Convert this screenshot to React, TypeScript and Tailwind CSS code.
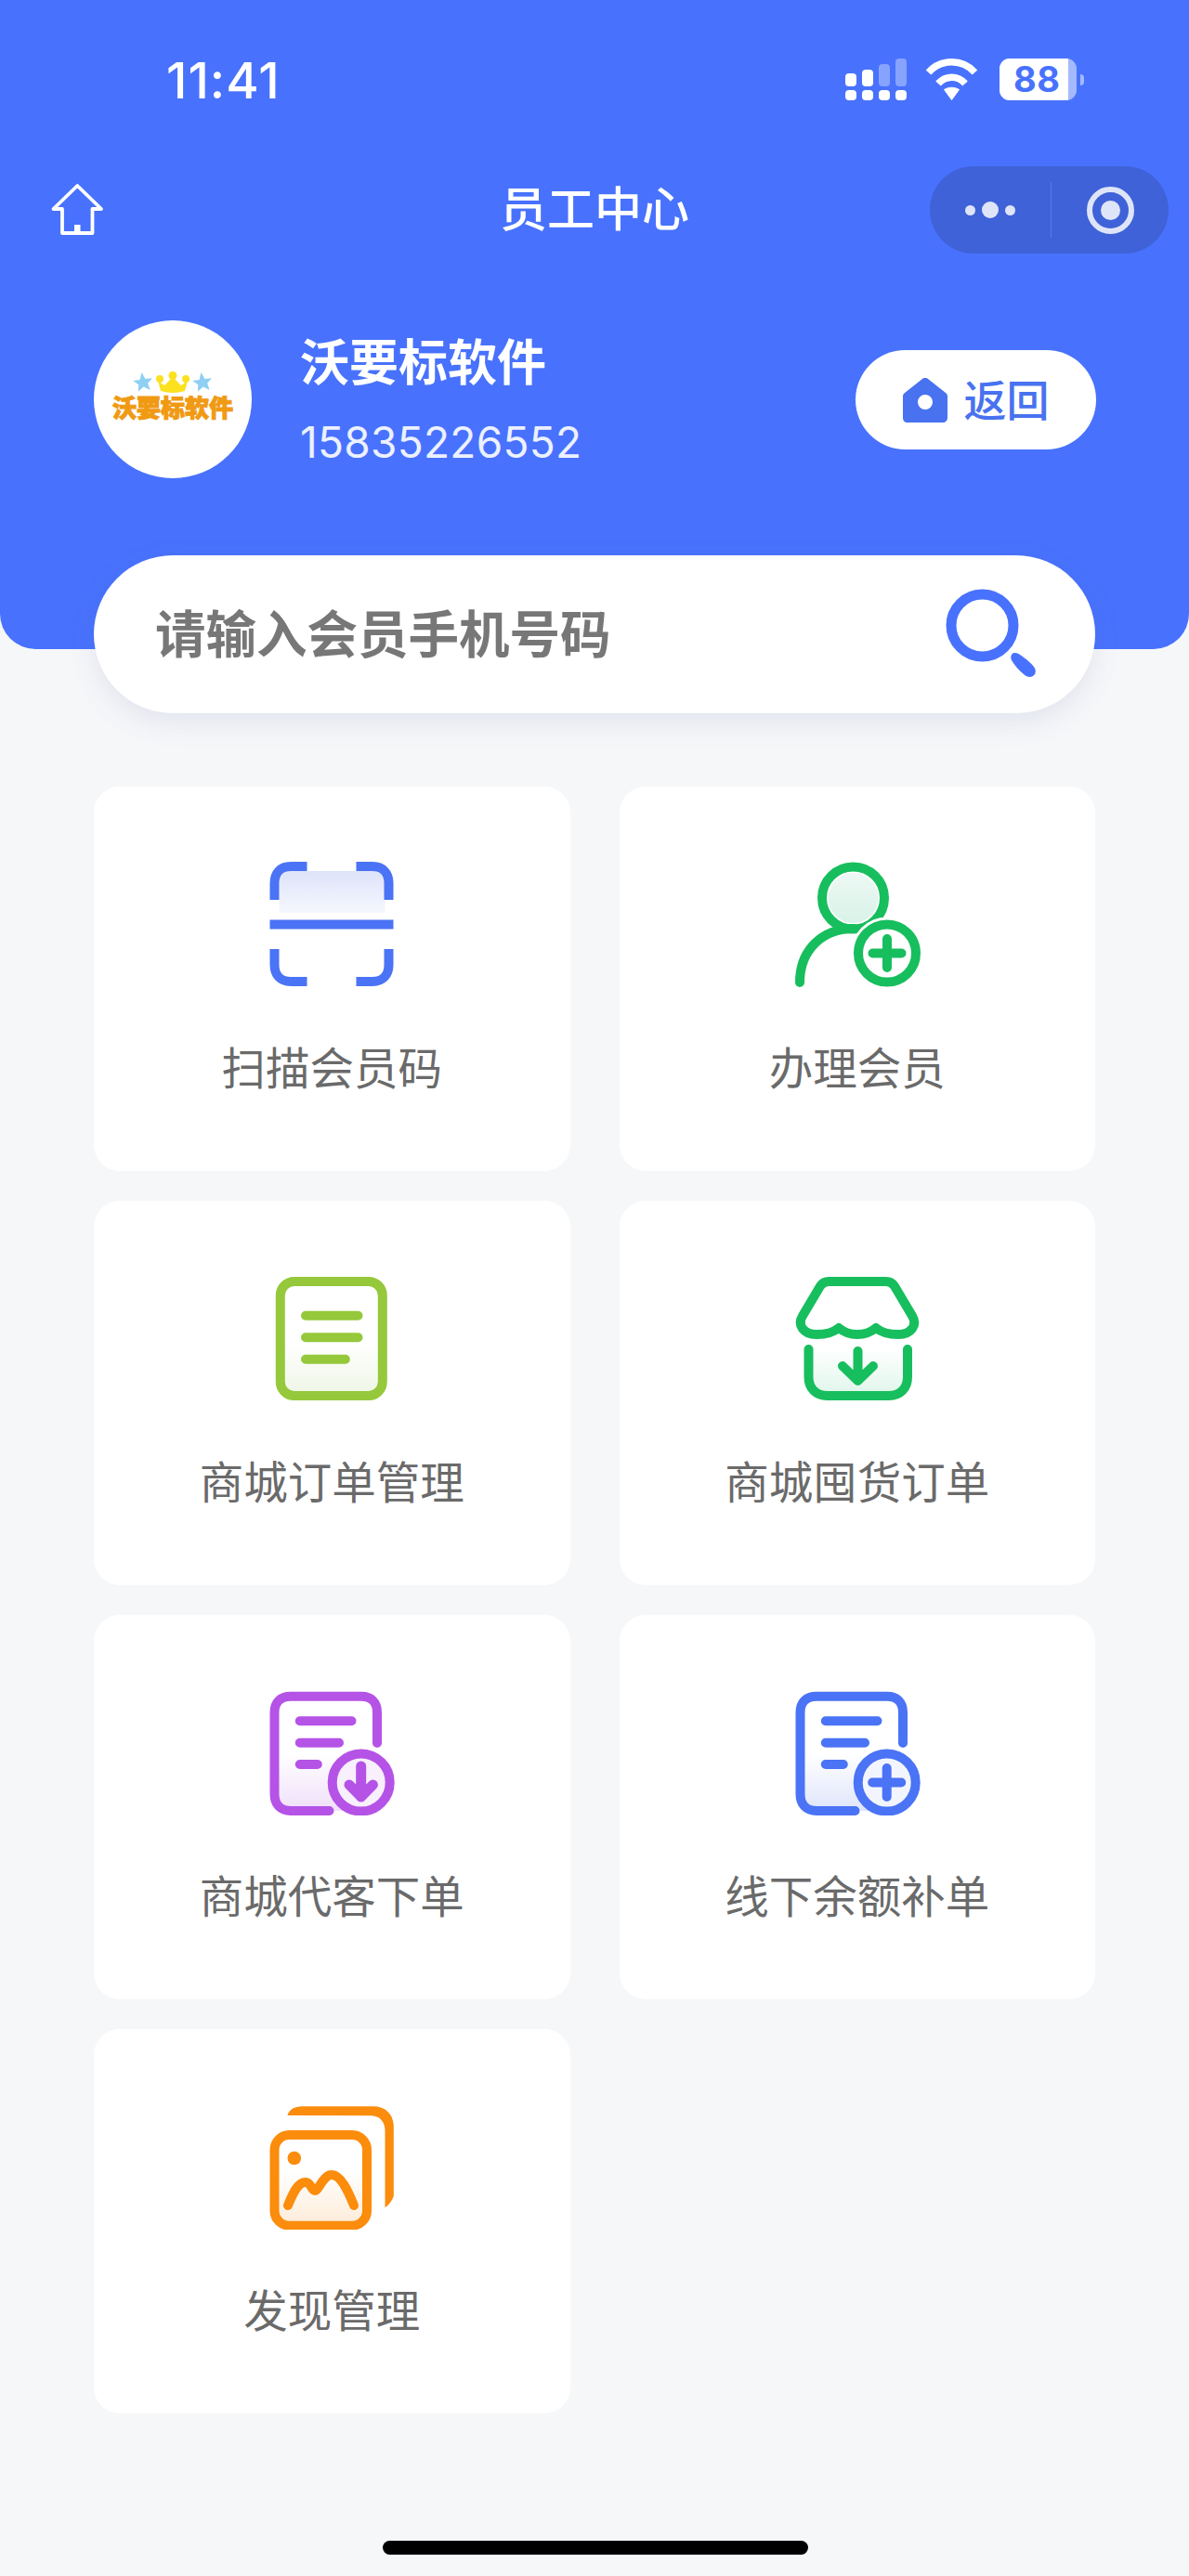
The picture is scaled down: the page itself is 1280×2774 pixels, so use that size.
import React from 'react';

const FONT = "font-['Inter','Noto_Sans_CJK_SC',sans-serif]";

function ScanIcon() {
  return (
    <svg width="136" height="136" viewBox="0 0 136 136" fill="none">
      <defs>
        <linearGradient id="scanFill" x1="0" y1="0" x2="0" y2="1">
          <stop offset="0" stopColor="#dde3fa" />
          <stop offset="1" stopColor="#f6f8fe" />
        </linearGradient>
      </defs>
      <rect x="11.500" y="11" width="114" height="45" fill="url(#scanFill)" />
      <path
        d="M41.500 6H24C13 6 6.500 13 6.500 24v18M94.500 6H112c11 0 17.500 7 17.500 18v18M6.500 95v17c0 11 6.500 18 17.500 18h17.500M129.500 95v17c0 11-6.500 18-17.500 18H94.500"
        stroke="#4a73f5"
        strokeWidth="10"
      />
      <path d="M1.500 68.500h133" stroke="#4a73f5" strokeWidth="10" />
    </svg>
  );
}

function MemberIcon() {
  return (
    <svg width="136" height="136" viewBox="0 0 136 136" fill="none">
      <defs>
        <linearGradient id="memberFill" x1="0" y1="0" x2="0" y2="1">
          <stop offset="0" stopColor="#eef8f4" />
          <stop offset="1" stopColor="#d8f3e8" />
        </linearGradient>
      </defs>
      <circle cx="63.500" cy="40" r="27" fill="url(#memberFill)" />
      <circle cx="63.500" cy="40" r="33.500" stroke="#17be5d" strokeWidth="10" />
      <path d="M6 131C6 96 30 73 64 73" stroke="#17be5d" strokeWidth="10" strokeLinecap="round" />
      <circle cx="100" cy="99.500" r="39" fill="white" />
      <circle cx="100" cy="99.500" r="31" stroke="#17be5d" strokeWidth="10" fill="white" />
      <path d="M100 84v31M84.500 99.500h31" stroke="#17be5d" strokeWidth="10" strokeLinecap="round" />
    </svg>
  );
}

function OrderIcon() {
  return (
    <svg width="136" height="136" viewBox="0 0 136 136" fill="none">
      <defs>
        <linearGradient id="orderFill" x1="0" y1="0" x2="0" y2="1">
          <stop offset="0.55" stopColor="#ffffff" />
          <stop offset="1" stopColor="#eef5e4" />
        </linearGradient>
      </defs>
      <rect x="12.800" y="7" width="110" height="123" rx="15" fill="url(#orderFill)" stroke="#95c83b" strokeWidth="10" />
      <path d="M40 43.700h56.500M40 67.300h56.500M40 90.700h42.800" stroke="#95c83b" strokeWidth="10" strokeLinecap="round" />
    </svg>
  );
}

function StoreIcon() {
  return (
    <svg width="136" height="136" viewBox="0 0 136 136" fill="none">
      <defs>
        <linearGradient id="storeFill" x1="0" y1="0" x2="0" y2="1">
          <stop offset="0" stopColor="#ffffff" />
          <stop offset="1" stopColor="#dff5ea" />
        </linearGradient>
      </defs>
      <path d="M15.500 80v30c0 12 8 20 20 20h66.500c12 0 20-8 20-20V80z" fill="url(#storeFill)" />
      <path d="M15.500 80v30c0 12 8 20 20 20h66.500c12 0 20-8 20-20V80" stroke="#17be5d" strokeWidth="10" strokeLinecap="round" />
      <path
        d="M37 7H99C103 7 106 9 108 12L127 44C133 54 126 64 112 64C102 64 94 62 88 57C82 62 76 64 68 64C60 64 54 62 48 57C42 62 34 64 24 64C10 64 3 54 9 44L28 12C30 9 33 7 37 7Z"
        stroke="#17be5d"
        strokeWidth="10"
        strokeLinejoin="round"
      />
      <path d="M68.500 82v32M52 98l16.500 16L85 98" stroke="#17be5d" strokeWidth="10" strokeLinecap="round" strokeLinejoin="round" />
    </svg>
  );
}

function DocIcon({ color, tint, id, plus }: { color: string; tint: string; id: string; plus?: boolean }) {
  return (
    <svg width="136" height="136" viewBox="0 0 136 136" fill="none">
      <defs>
        <linearGradient id={id} x1="0" y1="0" x2="0" y2="1">
          <stop offset="0.5" stopColor="#ffffff" />
          <stop offset="1" stopColor={tint} />
        </linearGradient>
      </defs>
      <path d="M6.500 25c0-11 7-17.300 17-17.300h76c10 0 17.500 6.300 17.500 17.300v88c0 11-7 18-17 18H23.500c-10 0-17-7-17-18z" fill={`url(#${id})`} />
      <path d="M65.500 131H24C13 131 6.500 124 6.500 113V25C6.500 14 13 7.700 24 7.700h76C110.500 7.700 117 14 117 25v33" stroke={color} strokeWidth="10" strokeLinecap="round" />
      <path d="M33.800 34.300h55.700M33.800 57.700H76M33.800 81h19" stroke={color} strokeWidth="10" strokeLinecap="round" />
      <circle cx="99.700" cy="100.500" r="31" fill={plus ? '#f3f5fe' : '#f8f0fd'} stroke={color} strokeWidth="10" />
      {plus ? (
        <path d="M99.700 85v31M84.200 100.500h31" stroke={color} strokeWidth="10" strokeLinecap="round" />
      ) : (
        <path d="M99.700 83v33M87 103l12.700 13 12.700-13" stroke={color} strokeWidth="11" strokeLinecap="round" strokeLinejoin="round" />
      )}
    </svg>
  );
}

function GalleryIcon() {
  return (
    <svg width="136" height="136" viewBox="0 0 136 136" fill="none">
      <defs>
        <linearGradient id="galleryFill" x1="0" y1="0" x2="0" y2="1">
          <stop offset="0.4" stopColor="#ffffff" />
          <stop offset="1" stopColor="#fdebd8" />
        </linearGradient>
      </defs>
      <path d="M20.500 13C22 7 28 3.300 36 3.300H113C126 3.300 134.800 12 134.800 25V100C133 105 130 109 125.500 112.300V30C125.500 20 120 13.300 110 13.300Z" fill="#fb8c0c" />
      <rect x="6.500" y="34" width="99.500" height="97.700" rx="16" fill="url(#galleryFill)" stroke="#fb8c0c" strokeWidth="10" />
      <circle cx="27.800" cy="59" r="7.300" fill="#fb8c0c" />
      <path d="M21 110C27 95 32 85 40 85C46 85 46 94 50 94C54 94 59 77 68 77C78 77 86 95 92 110" stroke="#fb8c0c" strokeWidth="10" strokeLinecap="round" strokeLinejoin="round" />
    </svg>
  );
}

const items = [
  { label: '扫描会员码', icon: <ScanIcon /> },
  { label: '办理会员', icon: <MemberIcon /> },
  { label: '商城订单管理', icon: <OrderIcon /> },
  { label: '商城囤货订单', icon: <StoreIcon /> },
  { label: '商城代客下单', icon: <DocIcon id="docPurple" color="#b553e6" tint="#f0e0fa" /> },
  { label: '线下余额补单', icon: <DocIcon id="docBlue" color="#4a73f5" tint="#dfe5fb" plus /> },
  { label: '发现管理', icon: <GalleryIcon /> },
];

function SignalBars() {
  const bars = [
    { h: 14, o: 1 },
    { h: 18, o: 1 },
    { h: 24, o: 0.35 },
    { h: 30, o: 0.35 },
  ];
  return (
    <div className="flex gap-[6px] items-end h-[45px]">
      {bars.map((bar, i) => (
        <div key={i} className="flex flex-col gap-[4px] w-[12px]">
          <div className="w-[12px] rounded-[4px] bg-white" style={{ height: bar.h, opacity: bar.o }} />
          <div className="w-[12px] h-[11px] rounded-[4px] bg-white" />
        </div>
      ))}
    </div>
  );
}

function LogoStar({ x }: { x: number }) {
  return (
    <polygon
      transform={`translate(${x} 12) rotate(-8)`}
      points="0,-11 3,-3.500 10.500,-3.400 5,1.500 6.500,9 0,4.500 -6.500,9 -5,1.500 -10.500,-3.400 -3,-3.500"
      fill="#8fd0f2"
    />
  );
}

export default function App() {
  return (
    <div className={`relative w-[1280px] h-[2774px] overflow-hidden bg-[#f6f7f9] ${FONT}`}>
      <div className="h-[699px] bg-[#4872fd] rounded-b-[38px] flex flex-col">
        {/* status bar */}
        <div className="h-[170px] pt-[57px] pl-[179px] pr-[113px] flex justify-between items-start text-white">
          <span className="text-[54px] leading-[60px] font-medium tracking-[1px]">11:41</span>
          <div className="flex items-start pt-[6px]">
            <SignalBars />
            <svg className="ml-[20px]" width="57" height="45" viewBox="0 0 57 45" fill="none">
              <path d="M3.500 15C17 0 40 0 53.500 15M14 27c8-9 21-9 29 0" stroke="white" strokeWidth="7.500" />
              <path d="M20.500 33.500c5-3 11-3 16 0L28.500 44.500z" fill="white" stroke="white" strokeWidth="1" strokeLinejoin="round" />
            </svg>
            <div className="ml-[23px] w-[83px] h-[45px] rounded-[11px] overflow-hidden bg-white/50">
              <div className="w-[74px] h-[45px] bg-white pl-[15px] text-[38px] leading-[45px] font-bold tracking-[0.5px] text-[#4872fd]">
                88
              </div>
            </div>
            <div className="ml-[4px] mt-[17px] w-[4px] h-[12px] rounded-r-full bg-white/50" />
          </div>
        </div>
        {/* nav */}
        <div className="relative h-[112px] flex items-center justify-center">
          <svg className="absolute left-[53px] top-[26px]" width="60" height="60" viewBox="0 0 60 60" fill="none">
            <path d="M30.300 4 56 29H46.500V55H14V29H4.500Z" stroke="white" strokeWidth="3.800" strokeLinejoin="round" />
            <rect x="27" y="46" width="6.500" height="9" fill="white" />
          </svg>
          <span className="text-[51px] leading-[56px] font-medium text-white">员工中心</span>
          <div className="absolute right-[22px] top-[9px] w-[257px] h-[94px] rounded-full bg-[#3f62d8] flex items-center">
            <div className="w-[130px] flex justify-center items-center gap-[7px]">
              <div className="w-[11px] h-[11px] rounded-full bg-[#dfe5f8]" />
              <div className="w-[18px] h-[18px] rounded-full bg-[#dfe5f8]" />
              <div className="w-[11px] h-[11px] rounded-full bg-[#dfe5f8]" />
            </div>
            <div className="w-px h-[60px] bg-[#5a79e0]" />
            <div className="flex-1 flex justify-center">
              <div className="w-[51px] h-[51px] rounded-full border-[6px] border-[#dfe5f8] flex items-center justify-center">
                <div className="w-[21px] h-[21px] rounded-full bg-[#dfe5f8]" />
              </div>
            </div>
          </div>
        </div>
        {/* profile */}
        <div className="pl-[101px] pr-[100px] pt-[63px] flex items-start justify-between">
          <div className="flex items-center">
            <div className="w-[170px] h-[170px] rounded-full bg-white flex flex-col items-center justify-center pb-[7px]">
              <svg width="86" height="24" viewBox="0 0 86 24">
                <LogoStar x={11} />
                <LogoStar x={75} />
                <circle cx="43" cy="4.500" r="4.500" fill="#fbe11f" />
                <circle cx="29" cy="8" r="4" fill="#fbe11f" />
                <circle cx="57" cy="8" r="4" fill="#fbe11f" />
                <path d="M27 10 34 15 43 6 52 15 59 10 56 21Q43 25 30 21Z" fill="#fbe11f" />
              </svg>
              <span className="mt-[3px] text-[26px] leading-[26px] font-black text-[#f09a14] whitespace-nowrap [-webkit-text-stroke:1px_#f09a14]">
                沃要标软件
              </span>
            </div>
            <div className="ml-[52px] flex flex-col gap-[24px] text-white">
              <span className="text-[53px] leading-[68px] font-semibold">沃要标软件</span>
              <span className="text-[46px] leading-[54px] tracking-[0.3px] text-white/90">15835226552</span>
            </div>
          </div>
          <div className="mt-[32px] w-[259px] h-[107px] rounded-full bg-white flex items-center justify-center gap-[18px]">
            <svg width="48" height="48" viewBox="0 0 48 48">
              <path
                fillRule="evenodd"
                d="M0 19.500C0 18 1 17 2 16L21 1c2-1.500 4-1.500 6 0l19 15c1 1 2 2 2 3.500V43c0 3-2 5-5 5H5c-3 0-5-2-5-5zM24 18a8 8 0 1 0 0 16 8 8 0 0 0 0-16z"
                fill="#4872f0"
              />
            </svg>
            <span className="text-[46px] leading-[54px] font-medium text-[#4872f0]">返回</span>
          </div>
        </div>
      </div>

      {/* search */}
      <div className="absolute left-[101px] top-[598px] w-[1078px] h-[170px] rounded-full bg-white shadow-[0_10px_30px_rgba(80,100,160,0.12)] flex items-center justify-between pl-[66px] pr-[62px]">
        <span className="text-[54.500px] leading-[60px] font-semibold text-[#777777]">请输入会员手机号码</span>
        <svg width="100" height="100" viewBox="0 0 100 100" fill="none">
          <circle cx="40.500" cy="40.500" r="33.500" stroke="#4872fd" strokeWidth="11" />
          <path
            d="M72 72C74 69 78 70 81 72C87 76 93 81 96 85C99 89 98 93 95 95C92 97 88 96 85 93C80 89 75 83 72 78C71 76 71 74 72 72Z"
            fill="#4872fd"
          />
        </svg>
      </div>

      {/* grid */}
      <div className="absolute left-[101px] top-[847px] w-[1078px] grid grid-cols-2 gap-x-[53px] gap-y-[32px]">
        {items.map((item) => (
          <div key={item.label} className="h-[414px] rounded-[28px] bg-white flex flex-col items-center pt-[80px]">
            {item.icon}
            <span className="mt-[58px] text-[47.500px] leading-[60px] text-[#6a6a6a]">{item.label}</span>
          </div>
        ))}
      </div>

      <div className="absolute left-[412px] top-[2736px] w-[458px] h-[15px] rounded-full bg-black" />
    </div>
  );
}
